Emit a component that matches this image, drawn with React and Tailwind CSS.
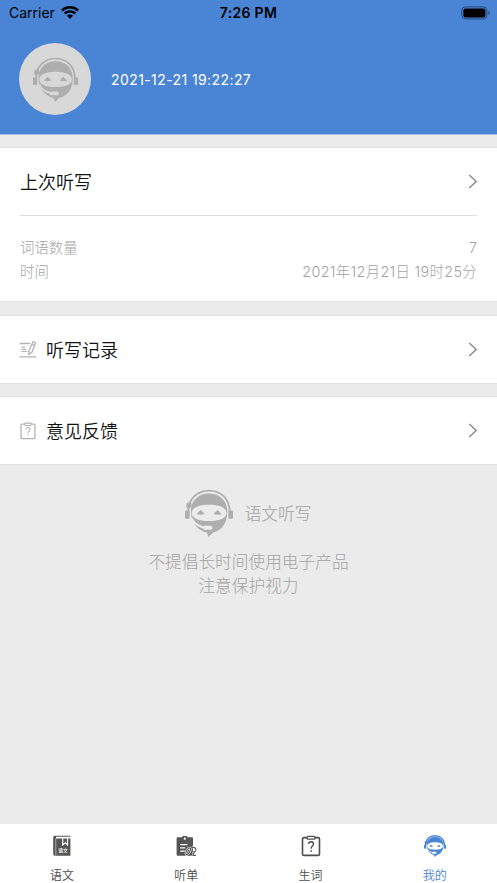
const tabs = [
  { label: '语文', icon: BookIcon },
  { label: '听单', icon: ListIcon },
  { label: '生词', icon: ClipboardIcon },
  { label: '我的', icon: NinjaIcon, active: true },
]

function NinjaIcon({ className = 'w-[22px] h-[22px]', gap = '#ffffff', band = 3.2 }) {
  return (
    <svg className={className} viewBox="0 0 48 48" fill="currentColor">
      <path d="M3.300 23C3.300 10 12 1.600 24 1.600S44.700 10 44.700 23" fill="none" stroke="currentColor" strokeWidth={band} />
      <path d="M24 4.400c-8.500 0-15 4.400-17.400 12.200-.7 2.600-.9 5.400-.6 8.100.8 9.800 7.500 17.200 16 18.900l1.300 4.400 4.900-4.500C36.500 41.600 42 34 42.200 24.700c.2-2.700 0-5.500-.8-8.100C39 8.800 32.500 4.400 24 4.400z" />
      <path d="M6.700 24c0-5.400 7.400-8.300 17.400-8.300s17.400 2.900 17.400 8.300-7.400 8-17.400 8-17.400-2.600-17.400-8z" fill={gap} />
      <path d="M11.500 25.300L15.800 21l3.900 4.100c-2.600.8-5.500.9-8.200.2zM36.700 25.300L32.400 21l-3.900 4.100c2.600.8 5.500.9 8.200.2z" />
      <path d="M6.800 29.500C9.500 35 14.500 38.300 22 38.900" fill="none" stroke={gap} strokeWidth="1.900" />
      <rect x="17.800" y="36.800" width="9.700" height="4" rx="2" fill={gap} />
      <rect x="0" y="21.500" width="4.600" height="8.300" rx="1" />
      <rect x="43.400" y="21.500" width="4.600" height="8.300" rx="1" />
      <path d="M1.600 14.500l2.500-1.500 2.600 1.800-.5 3.200L3.200 20l-1.900-2z" />
    </svg>
  )
}

function BookIcon() {
  return (
    <svg className="w-[22px] h-[22px]" viewBox="0 0 22 22">
      <path d="M3.600 .8h15.800v1H5v1.600h14.400v17.400H3.900A1.700 1.700 0 0 1 2.200 19V2.300A1.500 1.500 0 0 1 3.600.8z" fill="#555" />
      <path d="M4.800 3.500v17" stroke="#fff" strokeWidth=".5" />
      <path d="M11.700 3.200v6.700l2.400-2 2.400 2V3.200" fill="none" stroke="#fff" strokeWidth="1.200" />
      <text x="12.100" y="16.800" fontSize="4.800" fontWeight="500" textAnchor="middle" fill="#fff">语文</text>
    </svg>
  )
}

function ListIcon() {
  return (
    <svg className="w-[22px] h-[22px]" viewBox="0 0 22 22" fill="none">
      <path d="M2.600 2.300h4.200L8 1h3.600l1.200 1.300H17a1 1 0 0 1 1 1v16.400a1 1 0 0 1-1 1H2.600a1 1 0 0 1-1-1V3.300a1 1 0 0 1 1-1z" fill="#555" />
      <circle cx="9.800" cy="3.700" r="1.100" fill="#fff" />
      <path d="M5.200 9.600h7.300M5.200 12.900h5M5.200 16.200h4.500" stroke="#fff" strokeWidth="1.300" />
      <path d="M11 19.300c-1-1.500 1.500-6.500 3.800-6.500 1.600.3.500 3.200-.6 4.800-1 1.400-2.300 2.300-3.200 1.700zM17 12.600c2-.8 4.300.5 3.900 2.600-.4 1.700-2.200 2-3.600 1.300M19.300 17.500l-1.300 3h3" stroke="#fff" strokeWidth="2.200" />
      <path d="M11 19.300c-1-1.500 1.500-6.500 3.800-6.500 1.600.3.500 3.200-.6 4.800-1 1.400-2.300 2.300-3.200 1.700zM17 12.600c2-.8 4.300.5 3.900 2.600-.4 1.700-2.200 2-3.600 1.300M19.300 17.500l-1.300 3h3" stroke="#555" strokeWidth="1.100" />
    </svg>
  )
}

function ClipboardIcon({ className = 'w-[22px] h-[22px]' }) {
  return (
    <svg className={className} viewBox="0 0 22 22" fill="none" stroke="currentColor" strokeWidth="1.600">
      <rect x="2.500" y="2.600" width="17" height="17.800" rx="1.500" />
      <rect x="7" y="1.400" width="8" height="2.800" rx="1" fill="#fff" strokeWidth="1.300" />
      <path d="M8.600 8.900c.1-1.400 1.100-2.200 2.500-2.200s2.400.9 2.400 2.200c0 2.100-2.400 2.300-2.400 4.800M11.100 15.200v1.700" strokeWidth="1.400" />
    </svg>
  )
}

function RecordIcon() {
  return (
    <svg className="w-[18px] h-[18px]" viewBox="0 0 18 18" fill="none" stroke="currentColor">
      <path d="M.8 2.500h10.500M.5 15.900h16.800" strokeWidth="1.400" />
      <path d="M2.500 6.200h3.500M2.500 8.400h5M2.500 10.500h6" strokeWidth="1.200" />
      <path d="M14.100 .8l2.500 1.100-3.600 9.200-3 2.400-.1-3.800zM13.100 3.400l2.500 1.100" strokeWidth="1.300" />
    </svg>
  )
}

function Chevron() {
  return (
    <svg className="w-[10px] h-4" viewBox="0 0 10 16" fill="none" stroke="#8c8c8c" strokeWidth="1.500">
      <path d="M1.200 1L8.200 7.500l-7 6.500" />
    </svg>
  )
}

function StatusBar() {
  return (
    <div className="grid grid-cols-3 items-center h-[25px] pl-[9px] pr-[6px] text-[14px] text-black">
      <div className="flex items-center gap-[6px]">
        <span>Carrier</span>
        <svg className="w-[18px] h-[13px]" viewBox="0 0 18 13" fill="none" stroke="currentColor" strokeWidth="2.500">
          <path d="M.9 4.500c4.700-4.200 11.500-4.200 16.200 0M3.700 7.500c3.100-2.700 7.500-2.700 10.600 0" />
          <path d="M5.900 9.600c1.800-1.500 4.400-1.500 6.200 0L9 12.900z" fill="currentColor" stroke="none" />
        </svg>
      </div>
      <span className="-ml-[3px] text-center font-semibold tracking-[0.3px]">7:26 PM</span>
      <svg className="justify-self-end w-[30px] h-[14px]" viewBox="0 0 30 14">
        <rect x=".9" y=".9" width="25" height="12" rx="3.500" fill="none" stroke="#000" strokeOpacity=".45" />
        <rect x="2.400" y="2.400" width="22" height="9" rx="2" />
        <path d="M27.500 5v4c1.700-.5 1.700-3.500 0-4z" fillOpacity=".5" />
      </svg>
    </div>
  )
}

function MenuRow({ icon, label }) {
  return (
    <div className="flex items-center h-[69px] px-[19px] bg-white border-y border-[#e1e1e1]">
      <span className="text-[#b3b3b3]">{icon}</span>
      <span className="ml-[9px] pt-px text-[18px] font-[350] text-[#111]">{label}</span>
      <span className="ml-auto"><Chevron /></span>
    </div>
  )
}

export default function App() {
  return (
    <div className="flex flex-col h-screen bg-[#ebebeb] overflow-hidden font-['Inter','Noto_Sans_CJK_SC',sans-serif]">
      <header className="h-[135px] shrink-0 bg-[#4a84d4] border-b border-[#a9bfdf]">
        <StatusBar />
        <div className="flex items-center gap-5 pl-[19px] pt-[18px]">
          <div className="flex items-center justify-center w-[72px] h-[72px] rounded-full bg-[#d8d8d8] text-[#aeaeae]">
            <NinjaIcon className="w-[45px] h-[45px]" gap="#d8d8d8" band={1.8} />
          </div>
          <span className="text-[14px] tracking-[0.41px] text-white">2021-12-21 19:22:27</span>
        </div>
      </header>

      <section className="mt-3 h-[155px] shrink-0 px-5 bg-white border-y border-[#e1e1e1]">
        <div className="flex items-center justify-between h-[68px] border-b border-[#dedede]">
          <span className="pt-px text-[18px] font-[350] text-[#111]">上次听写</span>
          <span className="-mr-px"><Chevron /></span>
        </div>
        <div className="pt-5 text-[14.4px] leading-6 font-light text-[#a3a3a3]">
          <div className="flex justify-between">
            <span>词语数量</span>
            <span>7</span>
          </div>
          <div className="flex justify-between">
            <span>时间</span>
            <span className="tracking-[0.32px]">2021年12月21日 19时25分</span>
          </div>
        </div>
      </section>

      <div className="flex flex-col gap-3 mt-[13px]">
        <MenuRow icon={<RecordIcon />} label="听写记录" />
        <MenuRow icon={<ClipboardIcon className="w-[18px] h-[18px]" />} label="意见反馈" />
      </div>

      <main className="flex-1 pt-6 text-[#aeaeae]">
        <div className="flex items-center justify-center gap-3 pr-px">
          <NinjaIcon className="w-12 h-12" gap="#ebebeb" band={1.8} />
          <span className="pt-[3px] text-[16.7px] font-[350]">语文听写</span>
        </div>
        <p className="mt-3 text-center text-[16.7px] leading-6 font-light text-[#a3a3a3] font-['Kaiti_SC','STKaiti','KaiTi','Noto_Sans_CJK_SC',sans-serif]">
          不提倡长时间使用电子产品
          <br />
          注意保护视力
        </p>
      </main>

      <nav className="grid grid-cols-4 h-[59px] shrink-0 bg-white">
        {tabs.map(({ label, icon: Icon, active }) => (
          <div
            key={label}
            className={`flex flex-col items-center pt-[11px] ${active ? 'text-[#4a84d4]' : 'text-[#4d4d4d]'}`}
          >
            <Icon />
            <span className="mt-[10px] text-[12px] leading-[18px] font-[350]">{label}</span>
          </div>
        ))}
      </nav>
    </div>
  )
}
